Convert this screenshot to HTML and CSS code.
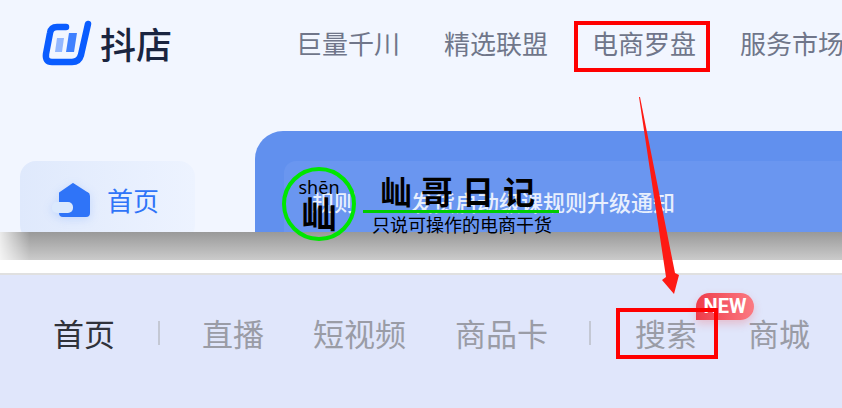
FILE: index.html
```html
<!DOCTYPE html>
<html lang="zh-CN">
<head>
  <meta charset="UTF-8">
  <meta name="viewport" content="width=device-width, initial-scale=1.0">
  <title>抖店</title>
  <link rel="stylesheet" href="styles.css">
</head>
<body>
  <div class="shop-panel">
    <div class="header">
      <div class="brand">
        <svg class="brand-logo" width="50" height="46" viewBox="0 0 50 46">
          <path d="M24 7H15Q9 7 8 13L4 34Q3 42 10 42H30Q37 42 39 35L46 4" fill="none" stroke="#0a5cff" stroke-width="6.5" stroke-linecap="round"/>
          <path d="M15 18H22L20 32H13Z" fill="#93b7ff"/>
          <path d="M27 13H35L32 32H24Z" fill="#3f80ff"/>
        </svg>
        <span class="brand-name">抖店</span>
      </div>
      <div class="nav">
        <span>巨量千川</span>
        <span>精选联盟</span>
        <span>电商罗盘</span>
        <span>服务市场</span>
      </div>
    </div>
    <div class="main">
      <div class="side-item">
        <svg class="home-icon" width="42" height="42" viewBox="0 0 42 42">
          <path d="M8 13L21 4L35 13Q37 14 37 16V33Q37 36 34 36H11Q8 36 8 33Z" fill="#2f74f8" stroke="#2f74f8" stroke-width="2" stroke-linejoin="round"/>
          <rect x="0" y="22" width="21" height="11" rx="5" fill="#dbe9fd"/>
        </svg>
        <span class="side-label">首页</span>
      </div>
      <div class="banner">
        <div class="notice">
          <span>规则</span>
          <span>发货启动级课规则升级通知</span>
        </div>
      </div>
    </div>
  </div>

  <div class="shade"></div>
  <div class="divider"></div>

  <div class="tabs">
    <span class="tab tab-active">首页</span>
    <i class="sep sep-one"></i>
    <span class="tab">直播</span>
    <span class="tab tab-gap">短视频</span>
    <span class="tab tab-gap">商品卡</span>
    <i class="sep sep-two"></i>
    <span class="tab tab-search">搜索<b class="new-badge">NEW</b></span>
    <span class="tab tab-mall">商城</span>
  </div>

  <!-- blog stamp laid over the screenshot -->
  <div class="stamp">
    <div class="stamp-circle">
      <span class="stamp-pinyin">shēn</span>
      <span class="stamp-char">屾</span>
    </div>
    <div class="stamp-title">屾哥日记</div>
    <div class="stamp-line"></div>
    <div class="stamp-sub">只说可操作的电商干货</div>
  </div>

  <!-- red marks -->
  <div class="mark mark-top"></div>
  <div class="mark mark-bottom"></div>
  <svg class="arrow" width="60" height="210" viewBox="0 0 60 210">
    <path d="M17 0L18 0L53 176L57 178L52 197L40 183L44 180Z" fill="#fe1a14"/>
  </svg>
</body>
</html>
```

FILE: styles.css
```css
* {
  box-sizing: border-box;
}

body {
  margin: 0;
  width: 842px;
  height: 408px;
  overflow: hidden;
  position: relative;
  background: #fff;
  font-family: "Noto Sans CJK SC", "Noto Sans", sans-serif;
}

.shop-panel {
  height: 232px;
  overflow: hidden;
  background: #f2f6ff;
}

.header {
  display: flex;
  align-items: flex-start;
  height: 131px;
  padding: 20px 0 0 42px;
}

.brand {
  display: flex;
  align-items: flex-start;
  width: 254px;
  flex-shrink: 0;
}

.brand-logo {
  display: block;
}

.brand-name {
  margin: 0 0 0 8px;
  font-size: 36px;
  font-weight: 500;
  line-height: 46px;
  color: #1a2540;
}

.nav {
  display: flex;
  gap: 44px;
  padding-top: 4px;
  font-size: 26px;
  line-height: 38px;
  color: #70768a;
  white-space: nowrap;
}

.main {
  display: flex;
  align-items: flex-start;
  padding-left: 20px;
}

.side-item {
  display: flex;
  flex-shrink: 0;
  align-items: center;
  width: 175px;
  height: 80px;
  margin-top: 30px;
  padding-left: 32px;
  gap: 13px;
  border-radius: 16px;
  background: linear-gradient(90deg, #dfe9fc, #edf3ff);
  font-size: 26px;
  color: #2f74f8;
}

.side-label {
  margin-top: -4px;
}

.home-icon {
  display: block;
  filter: drop-shadow(0 2px 5px rgba(47, 116, 248, .18));
}

.banner {
  flex-shrink: 0;
  width: 640px;
  height: 140px;
  margin-left: 60px;
  padding: 30px 0 0 29px;
  border-radius: 28px 0 0 0;
  background: #6190ee;
}

.notice {
  display: flex;
  gap: 55px;
  height: 90px;
  padding: 25px 0 0 28px;
  border-radius: 12px 0 0 0;
  background: #6a96f0;
  font-size: 22px;
  font-weight: 500;
  line-height: 30px;
  color: #e8effd;
  white-space: nowrap;
}

.shade {
  height: 28px;
  background: linear-gradient(180deg, #999 0%, #cbcbcb 100%);
  -webkit-mask-image: linear-gradient(90deg, rgba(0,0,0,.2) 0, #000 30px);
  mask-image: linear-gradient(90deg, rgba(0,0,0,.2) 0, #000 30px);
}

.divider {
  height: 15px;
  border-bottom: 2px solid #e0e0e0;
}

.tabs {
  display: flex;
  align-items: center;
  height: 133px;
  padding: 0 0 18px 53px;
  background: #e0e6fb;
  font-size: 31px;
  color: #9a9ca6;
  white-space: nowrap;
}

.tab {
  line-height: 42px;
}

.tab-active {
  color: #30323a;
}

.sep {
  display: block;
  width: 2px;
  height: 24px;
  background: #c4c8d4;
}

.sep-one {
  margin: 0 42px 0 43px;
}

.sep-two {
  margin: 0 44px 0 41px;
}

.tab-gap {
  margin-left: 49px;
}

.tab-search {
  position: relative;
}

.tab-mall {
  margin-left: 51px;
}

.new-badge {
  position: absolute;
  left: 61px;
  top: -19px;
  width: 58px;
  height: 27px;
  border-radius: 14px 14px 14px 0;
  background: linear-gradient(90deg, #ee3c4a, #fb7a82);
  box-shadow: 0 4px 8px rgba(245, 70, 80, .25);
  font: 700 20px/27px "Liberation Sans Narrow", Roboto, sans-serif;
  text-align: center;
  color: #fff;
}

.stamp {
  position: absolute;
  left: 282px;
  top: 167px;
  width: 280px;
  height: 75px;
  color: #000;
}

.stamp-circle {
  position: absolute;
  left: 0;
  top: 0;
  width: 74px;
  height: 74px;
  border: 4px solid #00e600;
  border-radius: 50%;
  text-align: center;
}

.stamp-pinyin {
  position: absolute;
  left: 0;
  right: 0;
  top: 6px;
  font: 18px/20px "Noto Sans", sans-serif;
}

.stamp-char {
  position: absolute;
  left: 0;
  right: 0;
  top: 19px;
  font-size: 36px;
  font-weight: 700;
  line-height: 44px;
}

.stamp-title {
  position: absolute;
  left: 98px;
  top: 4px;
  font-size: 32px;
  font-weight: 700;
  line-height: 38px;
  letter-spacing: 9px;
  white-space: nowrap;
}

.stamp-line {
  position: absolute;
  left: 81px;
  top: 43px;
  width: 196px;
  height: 3px;
  background: #00cc00;
}

.stamp-sub {
  position: absolute;
  left: 90px;
  top: 45px;
  font-size: 18px;
  line-height: 25px;
  white-space: nowrap;
}

.mark {
  position: absolute;
  border: 4px solid #f00;
}

.mark-top {
  left: 574px;
  top: 21px;
  width: 136px;
  height: 51px;
}

.mark-bottom {
  left: 616px;
  top: 308px;
  width: 102px;
  height: 51px;
}

.arrow {
  position: absolute;
  left: 622px;
  top: 97px;
}
```
